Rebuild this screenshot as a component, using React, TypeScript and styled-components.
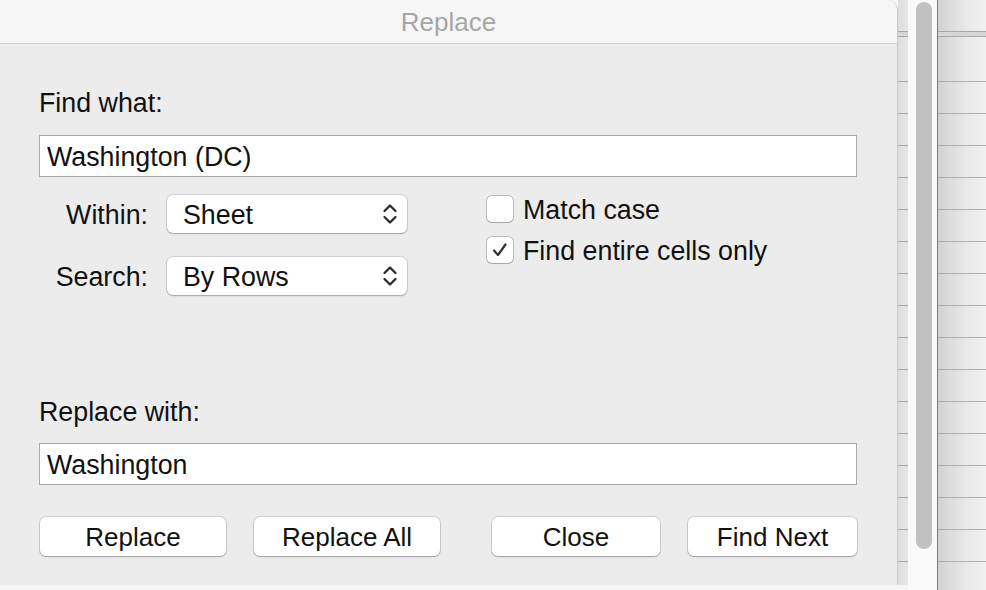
import React from "react";
import styled, { createGlobalStyle } from "styled-components";

const Global = createGlobalStyle`
  html, body { margin: 0; padding: 0; background: #f6f6f6; }
  body { font-family: "Liberation Sans", Arial, sans-serif; }
  * { box-sizing: border-box; }
`;

const FS = "26.8px";

const Screen = styled.div`
  display: flex;
  width: 986px;
  height: 590px;
  overflow: hidden;
  background: #f6f6f6;
`;

const LeftColumn = styled.div`
  display: flex;
  flex-direction: column;
  width: 908px;
  flex: none;
`;

const DialogRow = styled.div`
  display: flex;
  height: 585px;
`;

const Dialog = styled.div`
  width: 898px;
  height: 585px;
  display: flex;
  flex-direction: column;
  background: #ececec;
  border-right: 1px solid #cbcbcb;
  border-top-right-radius: 10px;
  overflow: hidden;
`;

const TitleBar = styled.div`
  height: 44px;
  flex: none;
  display: flex;
  align-items: center;
  justify-content: center;
  background: #f6f6f6;
  border-bottom: 1px solid #d2d2d2;
  color: #a6a6a6;
  font-size: 26px;
  padding-top: 1px;
`;

const Body = styled.div`
  flex: 1;
  display: flex;
  flex-direction: column;
  padding: 44px 40px 0 39px;
`;

const FieldLabel = styled.div<{ $top?: number }>`
  font-size: ${FS};
  line-height: 30px;
  color: #111;
  margin-top: ${(p) => p.$top ?? 0}px;
`;

const TextInput = styled.div<{ $top: number }>`
  height: 42px;
  margin-top: ${(p) => p.$top}px;
  background: #fff;
  border: 1px solid #a9a9a9;
  display: flex;
  align-items: center;
  padding: 3px 0 0 7px;
  font-size: ${FS};
  color: #111;
`;

const Options = styled.div`
  display: flex;
  margin-top: 18px;
`;

const SelectGrid = styled.div`
  display: grid;
  grid-template-columns: 109px 240px;
  column-gap: 19px;
  row-gap: 24px;
  align-items: center;
`;

const SelectLabel = styled.div`
  text-align: right;
  font-size: ${FS};
  color: #111;
  padding-top: 2px;
`;

const Select = styled.div`
  height: 38px;
  background: #fff;
  border-radius: 6px;
  box-shadow: 0 0 0 1px rgba(0, 0, 0, 0.11), 0 1px 1.5px rgba(0, 0, 0, 0.22);
  display: flex;
  align-items: center;
  justify-content: space-between;
  padding: 0 9px 0 16px;
  font-size: ${FS};
  color: #111;
`;

const SelectText = styled.span`
  padding-top: 2px;
`;

const CheckList = styled.div`
  display: flex;
  flex-direction: column;
  gap: 15px;
  margin-left: 80px;
  padding-top: 1px;
`;

const CheckRow = styled.div`
  display: flex;
  align-items: center;
  height: 26px;
  gap: 10px;
  font-size: ${FS};
  color: #111;
`;

const CheckText = styled.span`
  padding-top: 3px;
`;

const Box = styled.div`
  width: 26px;
  height: 26px;
  flex: none;
  background: #fff;
  border-radius: 5px;
  box-shadow: 0 0 0 1px rgba(0, 0, 0, 0.2), 0 1px 1px rgba(0, 0, 0, 0.12);
  display: flex;
  align-items: center;
  justify-content: center;
`;

const Buttons = styled.div`
  display: flex;
  justify-content: space-between;
  margin-top: 32px;
  padding-left: 1px;
`;

const ButtonGroup = styled.div`
  display: flex;
  gap: 28px;
`;

const Button = styled.div<{ $w: number }>`
  width: ${(p) => p.$w}px;
  height: 39px;
  background: #fff;
  border-radius: 6px;
  box-shadow: 0 0 0 1px rgba(0, 0, 0, 0.11), 0 1px 1.5px rgba(0, 0, 0, 0.24);
  display: flex;
  align-items: center;
  justify-content: center;
  padding-top: 2px;
  font-size: 26px;
  color: #111;
`;

const Sheet = styled.div<{ $w?: number; $bg: string }>`
  ${(p) => (p.$w ? `width: ${p.$w}px; flex: none;` : "flex: 1;")}
  display: flex;
  flex-direction: column;
  background: ${(p) => p.$bg};
  overflow: hidden;
`;

const SheetHeader = styled.div`
  height: 37px;
  flex: none;
  border-bottom: 1px solid #a8a8a8;
  box-shadow: inset 0 -4px 0 #d6d6d6, inset 0 -5px 0 #a8a8a8;
`;

const SheetGap = styled.div`
  height: 44px;
  flex: none;
`;

const SheetRow = styled.div`
  height: 32px;
  flex: none;
  border-top: 1px solid #aeaeae;
`;

const ScrollTrack = styled.div`
  width: 29px;
  flex: none;
  height: 590px;
  background: #fafafa;
  padding: 2px 5px 0 8px;
`;

const Thumb = styled.div`
  width: 16px;
  height: 547px;
  border-radius: 8px;
  background: #c1c1c1;
`;

const RightSheet = styled(Sheet)`
  border-left: 1px solid #7e7e7e;
`;

const Chevrons = () => (
  <svg width="16" height="26" viewBox="0 0 16 26" fill="none" stroke="#2b2b2b" strokeWidth="2.3" strokeLinecap="round" strokeLinejoin="round">
    <path d="M2.5 10 L8 4.5 L13.5 10" />
    <path d="M2.5 16 L8 21.5 L13.5 16" />
  </svg>
);

const Check = () => (
  <svg width="20" height="20" viewBox="0 0 20 20" fill="none" stroke="#333" strokeWidth="2.2" strokeLinecap="round" strokeLinejoin="round">
    <path d="M4 10.5 L8 15 L15.5 4.5" />
  </svg>
);

const rows = Array.from({ length: 17 });

const SheetLines = () => (
  <>
    <SheetHeader />
    <SheetGap />
    {rows.map((_, i) => (
      <SheetRow key={i} />
    ))}
  </>
);

export default function App() {
  return (
    <>
      <Global />
      <Screen>
        <LeftColumn>
          <DialogRow>
            <Dialog>
              <TitleBar>Replace</TitleBar>
              <Body>
                <FieldLabel>Find what:</FieldLabel>
                <TextInput $top={17}>Washington (DC)</TextInput>
                <Options>
                  <SelectGrid>
                    <SelectLabel>Within:</SelectLabel>
                    <Select>
                      <SelectText>Sheet</SelectText>
                      <Chevrons />
                    </Select>
                    <SelectLabel>Search:</SelectLabel>
                    <Select>
                      <SelectText>By Rows</SelectText>
                      <Chevrons />
                    </Select>
                  </SelectGrid>
                  <CheckList>
                    <CheckRow>
                      <Box />
                      <CheckText>Match case</CheckText>
                    </CheckRow>
                    <CheckRow>
                      <Box>
                        <Check />
                      </Box>
                      <CheckText>Find entire cells only</CheckText>
                    </CheckRow>
                  </CheckList>
                </Options>
                <FieldLabel $top={102}>Replace with:</FieldLabel>
                <TextInput $top={16}>Washington</TextInput>
                <Buttons>
                  <ButtonGroup>
                    <Button $w={186}>Replace</Button>
                    <Button $w={186}>Replace All</Button>
                  </ButtonGroup>
                  <ButtonGroup>
                    <Button $w={168}>Close</Button>
                    <Button $w={169}>Find Next</Button>
                  </ButtonGroup>
                </Buttons>
              </Body>
            </Dialog>
            <Sheet $w={10} $bg="linear-gradient(to right, #dedede, #e6e6e6)">
              <SheetLines />
            </Sheet>
          </DialogRow>
        </LeftColumn>
        <ScrollTrack>
          <Thumb />
        </ScrollTrack>
        <RightSheet $bg="linear-gradient(to right, #d2d2d2, #e8e8e8 55%, #f1f1f1)">
          <SheetLines />
        </RightSheet>
      </Screen>
    </>
  );
}
